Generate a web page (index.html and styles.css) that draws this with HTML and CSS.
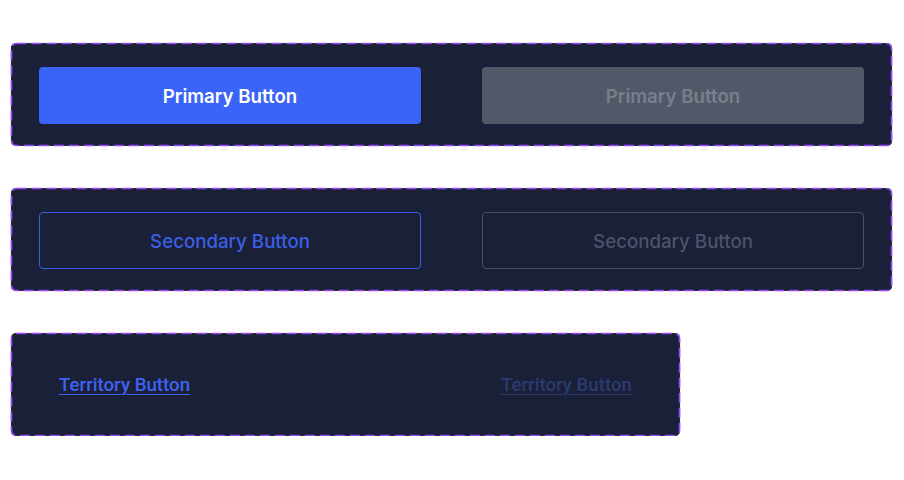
FILE: index.html
```html
<!DOCTYPE html>
<html lang="en">
<head>
<meta charset="utf-8">
<title>Buttons</title>
<link rel="stylesheet" href="styles.css">
</head>
<body>
<main class="page">
  <section class="set">
    <svg class="frame" aria-hidden="true"><rect class="edge"/><rect class="dash"/></svg>
    <button class="btn primary">Primary Button</button>
    <button class="btn primary disabled">Primary Button</button>
  </section>
  <section class="set">
    <svg class="frame" aria-hidden="true"><rect class="edge"/><rect class="dash"/></svg>
    <button class="btn secondary">Secondary Button</button>
    <button class="btn secondary disabled">Secondary Button</button>
  </section>
  <section class="set narrow">
    <svg class="frame" aria-hidden="true"><rect class="edge"/><rect class="dash"/></svg>
    <button class="btn link">Territory Button</button>
    <button class="btn link disabled">Territory Button</button>
  </section>
</main>
</body>
</html>
```
FILE: styles.css
```css
* { box-sizing: border-box; }
html, body { margin: 0; background: #ffffff; }
body { font-family: Inter, "Noto Sans", sans-serif; }
.page {
  display: flex;
  flex-direction: column;
  align-items: flex-start;
  gap: 42px;
  padding: 43px 0 0 11px;
}
.set {
  position: relative;
  width: 881px;
  height: 103px;
  display: flex;
  align-items: center;
  gap: 61px;
  padding: 1px 28px 0;
  background: #1a2038;
  border-radius: 5px;
}
.frame {
  position: absolute;
  left: 0;
  top: 0;
  width: 100%;
  height: 100%;
  overflow: visible;
  pointer-events: none;
}
.edge, .dash {
  x: 0.5px;
  y: 0.5px;
  width: calc(100% - 1px);
  height: calc(100% - 1px);
  rx: 5px;
  fill: none;
}
.edge { stroke: #2a2e3c; stroke-width: 1.2px; }
.dash {
  stroke: #9747ff;
  stroke-width: 1.6px;
  stroke-dasharray: 10 5;
}
.set.narrow {
  width: 669px;
  justify-content: space-between;
  padding-top: 0;
}
.btn {
  height: 57px;
  flex: 0 0 382px;
  border-radius: 4px;
  font-family: Inter, sans-serif;
  font-size: 18.7px;
  font-weight: 600;
  border: 0;
  background: none;
  cursor: pointer;
  padding: 2px 0 0;
}
.primary { background: #3a64f8; color: #ffffff; }
.primary.disabled { background: #525868; color: #7a7f8c; }
.secondary {
  border: 1px solid #3a5fe5;
  color: #3a5fe5;
  font-weight: 500;
}
.secondary.disabled { border-color: #4b5168; color: #4d5368; }
.link {
  flex: 0 0 auto;
  padding: 0 20px;
  font-family: Roboto, sans-serif;
  font-weight: 500;
  font-size: 18.7px;
  color: #3d63f0;
  text-decoration: underline;
  text-underline-offset: 3px;
  text-decoration-thickness: 1px;
}
.link.disabled { color: #2b3b70; }
```
